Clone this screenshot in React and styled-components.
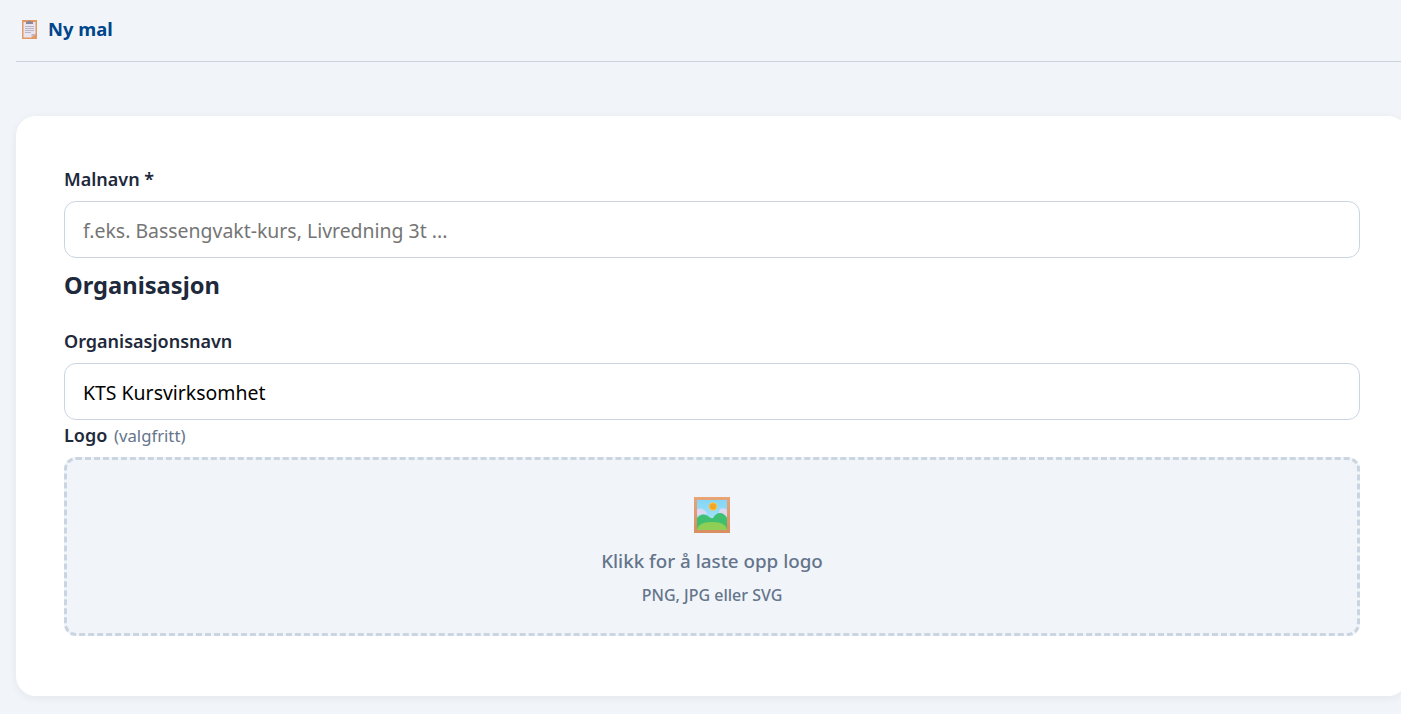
import React from "react";
import styled, { createGlobalStyle } from "styled-components";

const Global = createGlobalStyle`
  html, body { margin: 0; padding: 0; background: #f1f5f9; overflow: hidden; }
  body { font-family: "Noto Sans", "Open Sans", sans-serif; }
`;
const Page = styled.div`
  width: 1401px; height: 714px; overflow: hidden; box-sizing: border-box; padding-left: 16px;
`;
const Header = styled.header`
  width: 1392px; height: 62px; box-sizing: border-box; border-bottom: 1px solid #cdd3de;
  display: flex; align-items: center; gap: 11px; padding: 0 0 4px 6px; margin-bottom: 54px;
`;
const Title = styled.h1`
  margin: 0 0 1px; font-size: 18.4px; font-weight: 700; color: #00468c;
`;
const Card = styled.main`
  width: 1392px; height: 580px; box-sizing: border-box; background: #fff; border-radius: 20px;
  box-shadow: 0 2px 8px rgba(30, 41, 59, 0.06); padding: 50px 48px 0;
  display: flex; flex-direction: column;
`;
const Label = styled.label`
  display: block; font-size: 18px; line-height: 26px; font-weight: 600; color: #1e293b;
  margin: ${p => p.$mt ?? 0}px 0 ${p => p.$mb ?? 9}px;
`;
const Muted = styled.span`
  font-size: 16.7px; font-weight: 400; color: #64748b; margin-left: 2px;
`;
const Input = styled.input`
  display: block; width: 100%; height: 57px; box-sizing: border-box; border: 1px solid #cbd5e1; border-radius: 12px;
  background: #fff; padding: 2px 18px 0; font: 400 19.45px "Noto Sans", sans-serif; color: #000; outline: none;
  flex: none;
  &::placeholder { color: #757575; opacity: 1; }
`;
const Heading = styled.h2`
  margin: 11px 0 26px; font-size: 23.7px; line-height: 33px; font-weight: 700; color: #1e293b;
`;
const Drop = styled.div`
  height: 179px; flex: none; box-sizing: border-box; border: 3px dashed #cbd5e1; border-radius: 12px; background: #f1f5f9;
  display: flex; flex-direction: column; align-items: center; padding-top: 37px;
`;
const DropIcon = styled.svg`
  width: 36px; height: 36px; display: block; margin-bottom: 15px; flex: none;
`;
const DropTitle = styled.div`
  font-size: 18.8px; line-height: 26px; font-weight: 500; color: #64748b; margin-bottom: 9px;
`;
const DropHint = styled.div`
  font-size: 16px; line-height: 24px; font-weight: 500; color: #64748b;
`;
const TitleIcon = styled.svg`
  width: 15px; height: 20px; display: block; flex: none;
`;

export default function App() {
  return (
    <Page>
      <Global />
      <Header>
        <TitleIcon viewBox="0 0 15 20">
          <rect x="0" y="1" width="15" height="19" fill="#e39a62" />
          <path d="M1.5 3h12v12l-4 3.5h-8z" fill="#e8e4f2" />
          <path d="M13.500 15l-4 3.500V15z" fill="#bdb6cc" />
          <path d="M4 2.500h2.500a1 1 0 0 1 2 0H11v2.500H4z" fill="#8d8796" />
          <path d="M3 7.500h9M3 9.500h9M3 11.500h9M3 13.500h6" stroke="#b9b5c4" strokeWidth="1" />
        </TitleIcon>
        <Title>Ny mal</Title>
      </Header>
      <Card>
        <Label>Malnavn *</Label>
        <Input placeholder="f.eks. Bassengvakt-kurs, Livredning 3t ..." readOnly />
        <Heading>Organisasjon</Heading>
        <Label>Organisasjonsnavn</Label>
        <Input defaultValue="KTS Kursvirksomhet" readOnly />
        <Label $mt={2} $mb={8}>Logo <Muted>(valgfritt)</Muted></Label>
        <Drop>
          <DropIcon viewBox="0 0 36 36">
            <defs>
              <linearGradient id="frame" x1="0" y1="0" x2="0" y2="1">
                <stop offset="0" stopColor="#e8a577" />
                <stop offset="1" stopColor="#d98d62" />
              </linearGradient>
              <linearGradient id="sky" x1="0" y1="0" x2="0" y2="1">
                <stop offset="0" stopColor="#82d6f6" />
                <stop offset="1" stopColor="#b4e8f8" />
              </linearGradient>
            </defs>
            <rect width="36" height="36" fill="url(#frame)" />
            <rect x="3" y="3" width="30" height="30" fill="url(#sky)" />
            <circle cx="19" cy="9.500" r="3.800" fill="#f5a623" stroke="#fbc64d" strokeWidth="1" />
            <path d="M3 12.500q3-2 6 0 3 1 4 4l-10 2z" fill="#dcd8f2" />
            <path d="M26 12q4-2 7 1v6l-9-1z" fill="#dcd8f2" />
            <path d="M3 21q5-6 11-2 3 3 5 2 3-5 7-5 4 0 7 5v12H3z" fill="#3fbf6f" />
            <path d="M3 33q1-8 15-8t15 8z" fill="#8fcf55" />
          </DropIcon>
          <DropTitle>Klikk for å laste opp logo</DropTitle>
          <DropHint>PNG, JPG eller SVG</DropHint>
        </Drop>
      </Card>
    </Page>
  );
}
